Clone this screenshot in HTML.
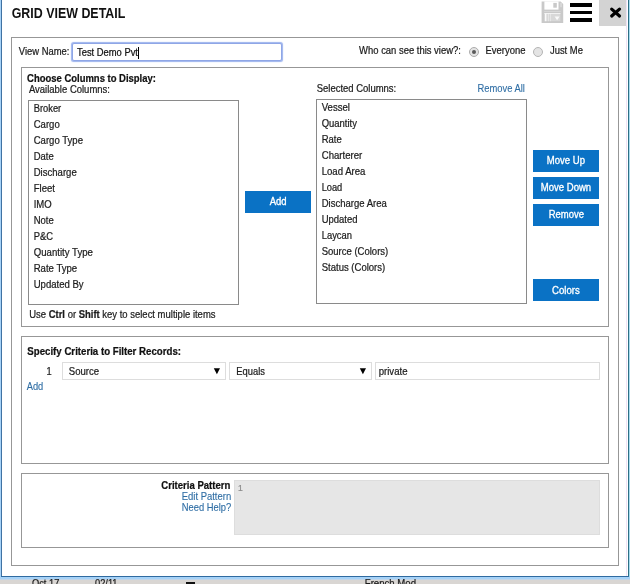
<!DOCTYPE html>
<html><head><meta charset="utf-8">
<style>
html,body{margin:0;padding:0;}
body{width:630px;height:584px;overflow:hidden;background:#fff;position:relative;font-family:"Liberation Sans",sans-serif;font-size:10px;color:#222;}
.a{position:absolute;}
.fs{position:absolute;border:1px solid #979797;box-sizing:border-box;}
.list{position:absolute;border:1px solid #8a8a8a;box-sizing:border-box;background:#fff;}
.btn{position:absolute;background:#0a72c5;}
.sel{position:absolute;box-sizing:border-box;border:1px solid #dddddd;background:#fff;}
</style></head><body>
<div class="a" style="left:0;top:0;width:630px;height:584px;filter:blur(0.3px);">
<!-- dialog frame -->
<div class="a" style="left:-4px;top:-4px;width:5px;height:583px;background:#a6d2f7;"></div>
<div class="a" style="left:1px;top:-4px;width:1px;height:581px;background:#3f72a3;"></div>
<div class="a" style="left:626px;top:-4px;width:1px;height:580px;background:#efe2f4;"></div>
<div class="a" style="left:628px;top:-4px;width:1px;height:581px;background:#2f6f85;"></div>
<div class="a" style="left:629px;top:-4px;width:5px;height:583px;background:#a5dcf0;"></div>
<div class="a" style="left:1px;top:576px;width:628px;height:1px;background:#2f6aa0;"></div>
<div class="a" style="left:-4px;top:577px;width:638px;height:2px;background:#a6d2f7;"></div>
<div class="a" style="left:-4px;top:579px;width:638px;height:1px;background:#c2d5e8;"></div>
<div class="a" style="left:-4px;top:580px;width:638px;height:10px;background:#d9d6d3;"></div>
<div class="a" style="left:185.7px;top:582.3px;width:9.5px;height:6px;background:#111;"></div>

<!-- header icons -->
<svg class="a" style="left:541px;top:1px;" width="23" height="23" viewBox="0 0 23 23">
 <path d="M0.6 0.4H19.6L22.2 3V21.9H0.6Z" fill="#c9c9c9"/>
 <rect x="3.4" y="0.4" width="14.1" height="8.2" fill="#fff"/>
 <rect x="12.3" y="1.9" width="3.5" height="4.8" fill="#c9c9c9"/>
 <rect x="19.4" y="1.8" width="1.3" height="4.4" fill="#dedede"/>
 <rect x="3.2" y="10" width="16.4" height="0.6" fill="#e2e2e2"/>
 <rect x="3.4" y="12" width="16" height="8.2" fill="#d8d8d8"/>
 <rect x="3.9" y="12" width="1.5" height="8.2" fill="#fafafa"/>
 <rect x="7" y="12" width="0.7" height="8.2" fill="#ececec"/>
 <rect x="9.2" y="12" width="0.7" height="8.2" fill="#ececec"/>
 <rect x="3.4" y="12" width="16" height="0.9" fill="#f4f4f4"/>
 <path d="M13.6 15.6H18.6L16.1 19.2Z" fill="#fafafa"/>
</svg>
<div class="a" style="left:570px;top:3.4px;width:21.5px;height:3.4px;background:#000;"></div>
<div class="a" style="left:570px;top:10.8px;width:21.5px;height:3.4px;background:#000;"></div>
<div class="a" style="left:570px;top:18.2px;width:21.5px;height:3.4px;background:#000;"></div>
<div class="a" style="left:599px;top:-4px;width:27px;height:30px;background:#d3d3d3;"></div>
<svg class="a" style="left:608px;top:5px;" width="16" height="16" viewBox="0 0 16 16"><path d="M3.7 4.1L11.5 11M11.5 4.1L3.7 11" stroke="#000" stroke-width="3.2" stroke-linecap="round"/></svg>

<!-- outer fieldset -->
<div class="fs" style="left:11px;top:37px;width:608px;height:529px;"></div>

<!-- view name row -->
<div class="a" style="left:72px;top:43px;width:210px;height:18px;box-sizing:border-box;border:1px solid #8fa6e6;border-radius:2px;box-shadow:0 0 1px 0.5px #9db4ee;background:#fff;"></div>
<div class="a" style="left:138px;top:47px;width:1px;height:12px;background:#000;"></div>
<div class="a" style="left:469px;top:47px;width:10px;height:10px;border-radius:50%;box-sizing:border-box;border:1px solid #ababab;background:#e4e4e4;"></div>
<div class="a" style="left:472px;top:50px;width:4px;height:4px;border-radius:50%;background:#5a5a5a;"></div>
<div class="a" style="left:533.3px;top:47px;width:10px;height:10px;border-radius:50%;box-sizing:border-box;border:1px solid #b4b4b4;background:#e4e4e4;"></div>

<!-- columns fieldset -->
<div class="fs" style="left:21px;top:67px;width:588px;height:260px;"></div>
<div class="list" style="left:28px;top:100px;width:211px;height:205px;"></div>
<div class="list" style="left:316px;top:99px;width:211px;height:205px;"></div>
<div class="btn" style="left:245px;top:191px;width:66px;height:21.5px;"></div>
<div class="btn" style="left:533px;top:150px;width:66px;height:22px;"></div>
<div class="btn" style="left:533px;top:177.2px;width:66px;height:21.8px;"></div>
<div class="btn" style="left:533px;top:204.3px;width:66px;height:21.6px;"></div>
<div class="btn" style="left:533px;top:279px;width:66px;height:21.8px;"></div>

<!-- criteria fieldset -->
<div class="fs" style="left:21px;top:336px;width:588px;height:128px;"></div>
<div class="sel" style="left:62px;top:362px;width:164px;height:18px;"></div>
<div class="sel" style="left:229px;top:362px;width:143px;height:18px;"></div>
<div class="sel" style="left:375px;top:362px;width:225px;height:18px;"></div>
<svg class="a" style="left:213px;top:368px;" width="8" height="7" viewBox="0 0 8 7"><path d="M0.8 0.3H7L3.9 6.2Z" fill="#000"/></svg>
<svg class="a" style="left:359.2px;top:368px;" width="8" height="7" viewBox="0 0 8 7"><path d="M0.8 0.3H7L3.9 6.2Z" fill="#000"/></svg>

<!-- pattern fieldset -->
<div class="fs" style="left:21px;top:473px;width:588px;height:75px;"></div>
<div class="a" style="left:234px;top:480px;width:366px;height:55px;background:#e6e6e6;box-sizing:border-box;border:1px solid #dddddd;"></div>

<svg class="a" style="left:0;top:0;" width="630" height="584" viewBox="0 0 630 584" font-family="Liberation Sans, sans-serif" xml:space="preserve">
<text transform="translate(11.70 17.70) scale(0.8948 1)" font-size="13.9" fill="#111" stroke="#111" stroke-width="0"><tspan font-weight="bold">GRID VIEW DETAIL</tspan></text>
<text transform="translate(18.80 55.00) scale(0.9329 1)" font-size="10.1" fill="#1c1c1c" stroke="#1c1c1c" stroke-width="0.22">View Name:</text>
<text transform="translate(77.00 56.00) scale(0.9292 1)" font-size="10.1" fill="#111" stroke="#111" stroke-width="0.22">Test Demo Pvt</text>
<text transform="translate(359.10 53.90) scale(0.9359 1)" font-size="10.1" fill="#1c1c1c" stroke="#1c1c1c" stroke-width="0.22">Who can see this view?:</text>
<text transform="translate(485.50 53.90) scale(0.9385 1)" font-size="10.1" fill="#1c1c1c" stroke="#1c1c1c" stroke-width="0.22">Everyone</text>
<text transform="translate(550.00 53.90) scale(0.9307 1)" font-size="10.1" fill="#1c1c1c" stroke="#1c1c1c" stroke-width="0.22">Just Me</text>
<text transform="translate(27.10 81.60) scale(0.9377 1)" font-size="10.1" fill="#111" stroke="#111" stroke-width="0.22"><tspan font-weight="bold">Choose Columns to Display:</tspan></text>
<text transform="translate(28.90 93.10) scale(0.9402 1)" font-size="10.1" fill="#1c1c1c" stroke="#1c1c1c" stroke-width="0.22">Available Columns:</text>
<text transform="translate(33.70 111.80) scale(0.9263 1)" font-size="10.1" fill="#1c1c1c" stroke="#1c1c1c" stroke-width="0.22">Broker</text>
<text transform="translate(33.70 127.80) scale(0.9464 1)" font-size="10.1" fill="#1c1c1c" stroke="#1c1c1c" stroke-width="0.22">Cargo</text>
<text transform="translate(33.70 143.80) scale(0.9478 1)" font-size="10.1" fill="#1c1c1c" stroke="#1c1c1c" stroke-width="0.22">Cargo Type</text>
<text transform="translate(33.70 159.80) scale(0.9385 1)" font-size="10.1" fill="#1c1c1c" stroke="#1c1c1c" stroke-width="0.22">Date</text>
<text transform="translate(33.70 175.80) scale(0.9461 1)" font-size="10.1" fill="#1c1c1c" stroke="#1c1c1c" stroke-width="0.22">Discharge</text>
<text transform="translate(33.70 191.80) scale(0.9457 1)" font-size="10.1" fill="#1c1c1c" stroke="#1c1c1c" stroke-width="0.22">Fleet</text>
<text transform="translate(33.70 207.80) scale(0.9430 1)" font-size="10.1" fill="#1c1c1c" stroke="#1c1c1c" stroke-width="0.22">IMO</text>
<text transform="translate(33.70 223.80) scale(0.9385 1)" font-size="10.1" fill="#1c1c1c" stroke="#1c1c1c" stroke-width="0.22">Note</text>
<text transform="translate(33.70 239.80) scale(0.9276 1)" font-size="10.1" fill="#1c1c1c" stroke="#1c1c1c" stroke-width="0.22">P&amp;C</text>
<text transform="translate(33.70 255.80) scale(0.9547 1)" font-size="10.1" fill="#1c1c1c" stroke="#1c1c1c" stroke-width="0.22">Quantity Type</text>
<text transform="translate(33.70 271.80) scale(0.9487 1)" font-size="10.1" fill="#1c1c1c" stroke="#1c1c1c" stroke-width="0.22">Rate Type</text>
<text transform="translate(33.70 287.80) scale(0.9466 1)" font-size="10.1" fill="#1c1c1c" stroke="#1c1c1c" stroke-width="0.22">Updated By</text>
<text transform="translate(29.20 317.80) scale(0.9390 1)" font-size="10.1" fill="#1c1c1c" stroke="#1c1c1c" stroke-width="0.22">Use <tspan font-weight="bold">Ctrl</tspan> or <tspan font-weight="bold">Shift</tspan> key to select multiple items</text>
<text transform="translate(269.70 204.90) scale(0.9400 1)" font-size="10.1" fill="#fff" stroke="#fff" stroke-width="0.3">Add</text>
<text transform="translate(316.70 92.20) scale(0.9394 1)" font-size="10.1" fill="#1c1c1c" stroke="#1c1c1c" stroke-width="0.22">Selected Columns:</text>
<text transform="translate(477.40 92.10) scale(0.9314 1)" font-size="10.1" fill="#2e6da4" stroke="#2e6da4" stroke-width="0.1">Remove All</text>
<text transform="translate(321.70 110.80) scale(0.9498 1)" font-size="10.1" fill="#1c1c1c" stroke="#1c1c1c" stroke-width="0.22">Vessel</text>
<text transform="translate(321.70 126.80) scale(0.9395 1)" font-size="10.1" fill="#1c1c1c" stroke="#1c1c1c" stroke-width="0.22">Quantity</text>
<text transform="translate(321.70 142.80) scale(0.9385 1)" font-size="10.1" fill="#1c1c1c" stroke="#1c1c1c" stroke-width="0.22">Rate</text>
<text transform="translate(321.70 158.80) scale(0.9502 1)" font-size="10.1" fill="#1c1c1c" stroke="#1c1c1c" stroke-width="0.22">Charterer</text>
<text transform="translate(321.70 174.80) scale(0.9510 1)" font-size="10.1" fill="#1c1c1c" stroke="#1c1c1c" stroke-width="0.22">Load Area</text>
<text transform="translate(321.64 190.80) scale(0.9200 1)" font-size="10.1" fill="#1c1c1c" stroke="#1c1c1c" stroke-width="0.22">Load</text>
<text transform="translate(321.70 206.80) scale(0.9452 1)" font-size="10.1" fill="#1c1c1c" stroke="#1c1c1c" stroke-width="0.22">Discharge Area</text>
<text transform="translate(321.70 222.80) scale(0.9377 1)" font-size="10.1" fill="#1c1c1c" stroke="#1c1c1c" stroke-width="0.22">Updated</text>
<text transform="translate(321.70 238.80) scale(0.9317 1)" font-size="10.1" fill="#1c1c1c" stroke="#1c1c1c" stroke-width="0.22">Laycan</text>
<text transform="translate(321.70 254.80) scale(0.9420 1)" font-size="10.1" fill="#1c1c1c" stroke="#1c1c1c" stroke-width="0.22">Source (Colors)</text>
<text transform="translate(321.70 270.80) scale(0.9441 1)" font-size="10.1" fill="#1c1c1c" stroke="#1c1c1c" stroke-width="0.22">Status (Colors)</text>
<text transform="translate(546.80 164.00) scale(0.9455 1)" font-size="10.1" fill="#fff" stroke="#fff" stroke-width="0.3">Move Up</text>
<text transform="translate(540.70 191.20) scale(0.9470 1)" font-size="10.1" fill="#fff" stroke="#fff" stroke-width="0.3">Move Down</text>
<text transform="translate(548.70 218.30) scale(0.9395 1)" font-size="10.1" fill="#fff" stroke="#fff" stroke-width="0.3">Remove</text>
<text transform="translate(552.00 294.00) scale(0.9524 1)" font-size="10.1" fill="#fff" stroke="#fff" stroke-width="0.3">Colors</text>
<text transform="translate(27.30 355.00) scale(0.9596 1)" font-size="10.1" fill="#111" stroke="#111" stroke-width="0.22"><tspan font-weight="bold">Specify Criteria to Filter Records:</tspan></text>
<text transform="translate(46.55 374.60) scale(0.9200 1)" font-size="10.1" fill="#1c1c1c" stroke="#1c1c1c" stroke-width="0.22">1</text>
<text transform="translate(68.80 374.90) scale(0.9495 1)" font-size="10.1" fill="#1c1c1c" stroke="#1c1c1c" stroke-width="0.22">Source</text>
<text transform="translate(236.30 374.70) scale(0.9286 1)" font-size="10.1" fill="#1c1c1c" stroke="#1c1c1c" stroke-width="0.22">Equals</text>
<text transform="translate(378.70 374.60) scale(0.9505 1)" font-size="10.1" fill="#1c1c1c" stroke="#1c1c1c" stroke-width="0.22">private</text>
<text transform="translate(26.73 390.00) scale(0.9200 1)" font-size="10.1" fill="#2e6da4" stroke="#2e6da4" stroke-width="0.1">Add</text>
<text transform="translate(161.30 488.80) scale(0.9462 1)" font-size="10.1" fill="#111" stroke="#111" stroke-width="0.22"><tspan font-weight="bold">Criteria Pattern</tspan></text>
<text transform="translate(181.70 500.00) scale(0.9389 1)" font-size="10.1" fill="#2e6da4" stroke="#2e6da4" stroke-width="0.1">Edit Pattern</text>
<text transform="translate(181.70 510.80) scale(0.9282 1)" font-size="10.1" fill="#2e6da4" stroke="#2e6da4" stroke-width="0.1">Need Help?</text>
<text transform="translate(237.98 491.30) scale(0.9000 1)" font-size="9.6" fill="#8a8a8a" stroke="#8a8a8a" stroke-width="0.22">1</text>
<text transform="translate(31.99 587.00) scale(0.9200 1)" font-size="10.1" fill="#1c1c1c" stroke="#1c1c1c" stroke-width="0.22">Oct 17</text>
<text transform="translate(95.01 587.00) scale(0.9200 1)" font-size="10.1" fill="#1c1c1c" stroke="#1c1c1c" stroke-width="0.22">02/11</text>
<text transform="translate(364.80 587.00) scale(0.9530 1)" font-size="10.1" fill="#1c1c1c" stroke="#1c1c1c" stroke-width="0.22">French Mod</text>
</svg>
</div>
</body></html>
